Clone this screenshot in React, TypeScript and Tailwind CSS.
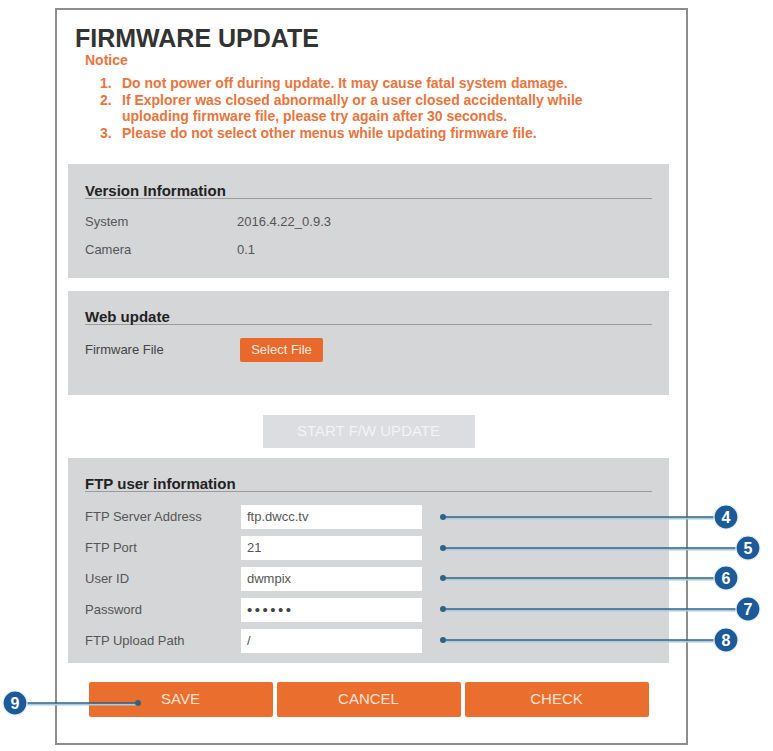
import React from "react";

const notices = [
  ["1.", "Do not power off during update. It may cause fatal system damage."],
  [
    "2.",
    "If Explorer was closed abnormally or a user closed accidentally while uploading firmware file, please try again after 30 seconds.",
  ],
  ["3.", "Please do not select other menus while updating firmware file."],
];

const ftpFields = [
  { label: "FTP Server Address", value: "ftp.dwcc.tv" },
  { label: "FTP Port", value: "21" },
  { label: "User ID", value: "dwmpix" },
  { label: "Password", value: "••••••", secret: true },
  { label: "FTP Upload Path", value: "/" },
];

// callout markers: dot on the left, numbered disc on the right
const callouts = [
  { n: 4, x1: 443, cx: 726, y: 517 },
  { n: 5, x1: 443, cx: 748, y: 548 },
  { n: 6, x1: 443, cx: 726, y: 578 },
  { n: 7, x1: 443, cx: 748, y: 609 },
  { n: 8, x1: 443, cx: 726, y: 640 },
];

function SectionTitle({ children }: { children: React.ReactNode }) {
  return (
    <div className="border-b border-[#9a9b9d] text-[15px] leading-[15px] font-bold text-[#222]">
      {children}
    </div>
  );
}

export default function App() {
  return (
    <div className="relative w-[773px] h-[751px] bg-white font-['Liberation_Sans',Arial,sans-serif] overflow-hidden">
      <div className="ml-[55px] mt-[8px] w-[633px] border-2 border-[#8d8d8d] pb-[26px]">
        {/* Header + notice */}
        <h1 className="pl-[18px] pt-[14px] text-[25px] leading-[28px] font-bold text-[#333]">
          FIRMWARE UPDATE
        </h1>
        <div className="pl-[28px] text-[14px] leading-[16px] font-bold text-[#e8753d]">
          Notice
        </div>
        <div className="mt-[7px] pl-[43px] pr-[60px] text-[14px] leading-[16.5px] font-bold text-[#e8753d]">
          {notices.map(([num, text]) => (
            <div key={num} className="flex">
              <span className="w-[22px] shrink-0">{num}</span>
              <span>{text}</span>
            </div>
          ))}
        </div>

        {/* Version Information */}
        <div className="ml-[11px] mt-[23px] w-[601px] bg-[#d5d6d8] px-[17px] pt-[19px] pb-[14px]">
          <SectionTitle>Version Information</SectionTitle>
          <div className="mt-[9px] text-[13px] leading-[28px] text-[#555]">
            <div className="flex">
              <span className="w-[152px]">System</span>
              <span>2016.4.22_0.9.3</span>
            </div>
            <div className="flex">
              <span className="w-[152px]">Camera</span>
              <span>0.1</span>
            </div>
          </div>
        </div>

        {/* Web update */}
        <div className="ml-[11px] mt-[13px] w-[601px] bg-[#d5d6d8] px-[17px] pt-[18px] pb-[33px]">
          <SectionTitle>Web update</SectionTitle>
          <div className="mt-[13px] flex items-center text-[13px] text-[#444]">
            <span className="w-[155px]">Firmware File</span>
            <button className="h-[24px] w-[83px] bg-[#e8692b] text-[13px] text-[#fdebe0] rounded-[2px]">
              Select File
            </button>
          </div>
        </div>

        <div className="ml-[11px] mt-[20px] w-[601px] flex justify-center">
          <button className="h-[33px] w-[212px] bg-[#dcdde0] text-[15px] text-[#f3f3f5]">
            START F/W UPDATE
          </button>
        </div>

        {/* FTP user information */}
        <div className="ml-[11px] mt-[10px] w-[601px] bg-[#d5d6d8] px-[17px] pt-[18px] pb-[10px]">
          <SectionTitle>FTP user information</SectionTitle>
          <div className="mt-[13px] flex flex-col gap-[7px] text-[13px] text-[#555]">
            {ftpFields.map((f) => (
              <div key={f.label} className="flex items-center h-[24px]">
                <span className="w-[156px]">{f.label}</span>
                <div
                  className={
                    f.secret
                      ? "h-[24px] w-[181px] bg-white pl-[6px] leading-[24px] text-[15px] tracking-[2.5px] text-[#444]"
                      : "h-[24px] w-[181px] bg-white pl-[6px] leading-[24px] text-[#555]"
                  }
                >
                  {f.value}
                </div>
              </div>
            ))}
          </div>
        </div>

        <div className="ml-[11px] mt-[19px] w-[601px] flex justify-center gap-[4px]">
          {["SAVE", "CANCEL", "CHECK"].map((b) => (
            <button
              key={b}
              className="h-[35px] w-[184px] bg-[#ea6e2d] text-[15px] text-[#fde2d2] rounded-[2px]"
            >
              {b}
            </button>
          ))}
        </div>
      </div>

      {/* annotation markers */}
      <svg
        className="absolute left-0 top-0 pointer-events-none"
        width="773"
        height="751"
        viewBox="0 0 773 751"
      >
        {[...callouts, { n: 9, x1: 138, cx: 15, y: 703 }].map((c) => (
          <g key={c.n}>
            <line x1={c.x1} y1={c.y + 1.5} x2={c.cx} y2={c.y + 1.5} stroke="#a9cbe0" strokeWidth="2" />
            <line x1={c.x1} y1={c.y} x2={c.cx} y2={c.y} stroke="#2f6386" strokeWidth="1.6" />
            <circle cx={c.x1} cy={c.y} r="3" fill="#2f6386" />
            <circle cx={c.cx} cy={c.y} r="12" fill="#1c5a98" stroke="#e8f0f7" strokeWidth="1.2" />
            <text
              x={c.cx}
              y={c.y + 5.5}
              textAnchor="middle"
              fontSize="16"
              fontWeight="bold"
              fill="#fff"
              fontFamily="'Liberation Sans', Arial, sans-serif"
            >
              {c.n}
            </text>
          </g>
        ))}
      </svg>
    </div>
  );
}
